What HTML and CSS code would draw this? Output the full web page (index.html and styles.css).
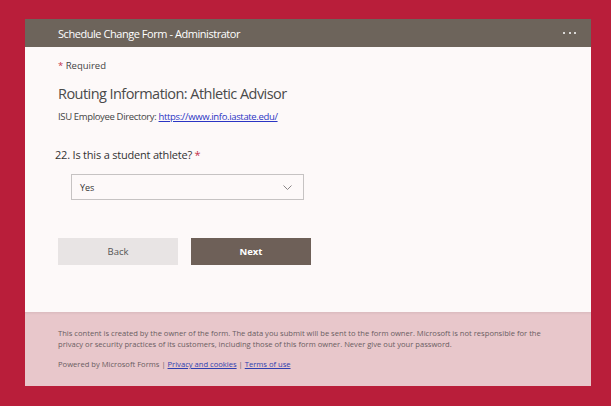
FILE: index.html
```html
<!DOCTYPE html>
<html>
<head>
<meta charset="utf-8">
<link rel="stylesheet" href="styles.css">
</head>
<body>
<div class="card">
  <div class="header">
    <span class="title">Schedule Change Form - Administrator</span>
    <span class="dots"><i></i><i></i><i></i></span>
  </div>
  <div class="main">
    <div class="required"><span class="star">*</span> Required</div>
    <h1 class="section">Routing Information: Athletic Advisor</h1>
    <div class="desc">ISU Employee Directory: <a href="#">https://www.info.iastate.edu/</a></div>
    <div class="question"><span class="num">22.</span> Is this a student athlete? <span class="star">*</span></div>
    <div class="select">
      <span>Yes</span>
      <svg width="9" height="5" viewBox="0 0 9 5"><path d="M0.5 0.5 L4.5 4.5 L8.5 0.5" fill="none" stroke="#8a8586" stroke-width="1"/></svg>
    </div>
    <div class="buttons">
      <button class="btn back">Back</button>
      <button class="btn next">Next</button>
    </div>
  </div>
  <div class="footer">
    <p class="notice">This content is created by the owner of the form. The data you submit will be sent to the form owner. Microsoft is not responsible for the privacy or security practices of its customers, including those of this form owner. Never give out your password.</p>
    <p class="powered">Powered by Microsoft Forms | <a href="#">Privacy and cookies</a> | <a href="#">Terms of use</a></p>
  </div>
</div>
</body>
</html>
```

FILE: styles.css
```css
* { box-sizing: border-box; }
html, body { margin: 0; padding: 0; }
body {
  background: #b91e3a;
  width: 611px;
  height: 406px;
  overflow: hidden;
  padding: 19px 0 0 25px;
  font-family: "Open Sans", "Noto Sans", sans-serif;
}
.card { width: 566px; }
.header {
  height: 28px;
  background: #6d645b;
  color: #ffffff;
  display: flex;
  align-items: center;
  justify-content: space-between;
  padding: 0 15px 0 33px;
}
.title { font-size: 11px; letter-spacing: -0.45px; }
.dots { display: flex; gap: 3.5px; }
.dots i { display: block; width: 2px; height: 2px; border-radius: 50%; background: #fff; }
.main {
  background: #fdf9f9;
  height: 265px;
  padding: 12px 0 0 33px;
  color: #333;
}
.required { font-size: 9.5px; color: #444; line-height: 13px; }
.star { color: #c4314b; }
.section {
  margin: 12px 0 0 0;
  font-weight: normal;
  font-size: 14.5px;
  line-height: 20px;
  color: #4a4a4a;
  letter-spacing: -0.55px;
}
.desc { font-size: 9.5px; line-height: 13px; margin-top: 6px; color: #444; letter-spacing: -0.35px; }
.desc a { color: #2b35c4; }
.question { margin-top: 24px; font-size: 11px; line-height: 15px; color: #333; margin-left: -3px; letter-spacing: -0.2px; }
.select {
  margin: 12px 0 0 13px;
  width: 233px;
  height: 26px;
  border: 1px solid #c6c3c3;
  background: #fdf9f9;
  display: flex;
  align-items: center;
  justify-content: space-between;
  padding: 0 11px 0 8px;
  font-size: 9px;
  color: #333;
}
.buttons { display: flex; gap: 13px; margin-top: 38px; }
.btn {
  width: 120px;
  height: 27px;
  border: none;
  font-family: inherit;
  font-size: 9.5px;
  padding: 0;
}
.back { background: #e8e4e4; color: #555; }
.next { background: #6e6058; color: #fff; font-weight: bold; }
.footer {
  background: #e8c7cb;
  height: 74px;
  padding: 16px 43px 0 33px;
  box-shadow: inset 0 3px 3px -2px rgba(0,0,0,0.08);
  color: #6a5d62;
  font-size: 7.6px;
  letter-spacing: 0;
}
.footer p { margin: 0; line-height: 11px; }
.footer .powered { margin-top: 9px; }
.footer a { color: #2f3fb0; }
```
